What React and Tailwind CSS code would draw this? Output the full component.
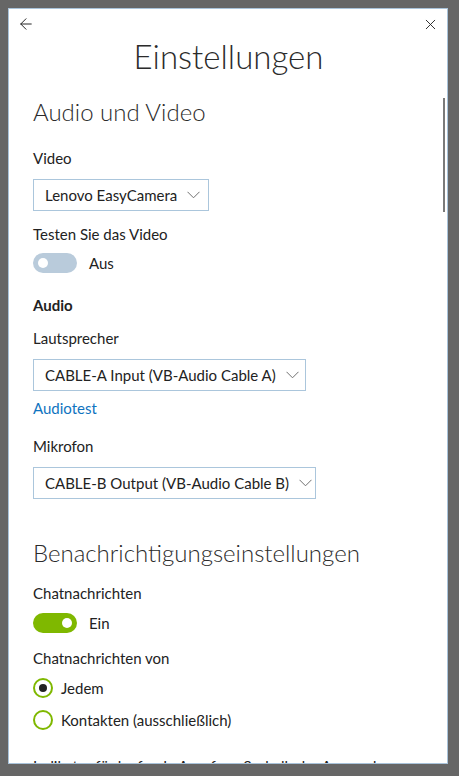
import { ArrowLeft, X } from 'lucide-react';

const font = { fontFamily: 'Lato, "Open Sans", sans-serif' };

function Chevron() {
  return (
    <svg width="13" height="8" viewBox="0 0 13 8" className="shrink-0">
      <path d="M0.5 0.8 L6.5 6.8 L12.5 0.8" fill="none" stroke="#707070" strokeWidth="1" />
    </svg>
  );
}

function Dropdown({ label, width }) {
  return (
    <div className={`flex items-center justify-between gap-[10px] h-[32px] border border-[#abc6dc] pl-[11px] pr-[10px] ${width}`}>
      <span className="text-[15px] text-[#222] whitespace-nowrap">{label}</span>
      <Chevron />
    </div>
  );
}

function Toggle({ on, label }) {
  return (
    <div className="flex items-center h-[20px] gap-[12px]">
      <div className={`w-[44px] h-[20px] rounded-full flex items-center px-[5px] ${on ? 'bg-[#7fb800] justify-end' : 'bg-[#b9cbdb] justify-start'}`}>
        <div className="w-[10px] h-[10px] rounded-full bg-white" />
      </div>
      <span className="text-[15px] text-[#222]">{label}</span>
    </div>
  );
}

function Radio({ checked, label, className }) {
  return (
    <div className={`flex items-center h-[20px] gap-[8px] ${className}`}>
      <div className="w-[20px] h-[20px] rounded-full border-2 border-[#7fb800] flex items-center justify-center">
        {checked && <div className="w-[8px] h-[8px] rounded-full bg-[#222]" />}
      </div>
      <span className="text-[15px] text-[#222]">{label}</span>
    </div>
  );
}

export default function App() {
  return (
    <div className="w-[459px] h-[776px] bg-[#666666] pt-[8px] pl-[8px]" style={font}>
      <div className="relative w-[440px] h-[756px] bg-white border border-[#a9c3da] overflow-hidden flex flex-col">
        {/* Header */}
        <div className="flex items-start justify-between pl-[8px] pr-[8px]">
          <div className="h-[30px] flex items-center">
            <ArrowLeft size={18} strokeWidth={1.3} className="text-[#222]" />
          </div>
          <h1 className="flex-1 text-center pt-[25px] text-[33px] leading-[44px] font-light text-[#2b2b2b]">Einstellungen</h1>
          <div className="h-[30px] flex items-center">
            <X size={17} strokeWidth={1.3} className="text-[#222]" />
          </div>
        </div>

        {/* Scrollbar */}
        <div className="absolute right-[2px] top-[89px] w-[2px] h-[114px] bg-[#7a7a7a]" />

        {/* Content */}
        <div className="flex flex-col items-start px-[24px]">
          <h2 className="mt-[18px] text-[24px] leading-[32px] font-light text-[#2b2b2b]">Audio und Video</h2>
          <p className="mt-[20px] text-[15px] leading-[20px] text-[#222]">Video</p>
          <div className="mt-[11px]">
            <Dropdown label="Lenovo EasyCamera" width="w-[176px]" />
          </div>
          <p className="mt-[13px] text-[15px] leading-[20px] text-[#222]">Testen Sie das Video</p>
          <div className="mt-[9px]">
            <Toggle on={false} label="Aus" />
          </div>
          <p className="mt-[22px] text-[15px] leading-[20px] font-bold text-[#222]">Audio</p>
          <p className="mt-[13px] text-[15px] leading-[20px] text-[#222]">Lautsprecher</p>
          <div className="mt-[11px]">
            <Dropdown label="CABLE-A Input (VB-Audio Cable A)" width="w-[273px]" />
          </div>
          <a className="mt-[7px] text-[15px] leading-[20px] text-[#0f74c0]">Audiotest</a>
          <p className="mt-[18px] text-[15px] leading-[20px] text-[#222]">Mikrofon</p>
          <div className="mt-[11px]">
            <Dropdown label="CABLE-B Output (VB-Audio Cable B)" width="w-[283px]" />
          </div>

          <h2 className="mt-[38px] text-[24px] leading-[32px] font-light text-[#2b2b2b]">Benachrichtigungseinstellungen</h2>
          <p className="mt-[14px] text-[15px] leading-[20px] text-[#222]">Chatnachrichten</p>
          <div className="mt-[10px]">
            <Toggle on label="Ein" />
          </div>
          <p className="mt-[15px] text-[15px] leading-[20px] text-[#222]">Chatnachrichten von</p>
          <Radio checked label="Jedem" className="mt-[10px]" />
          <Radio label="Kontakten (ausschließlich)" className="mt-[12px]" />
          <p className="mt-[26px] text-[15px] leading-[20px] text-[#222] whitespace-nowrap">Indikator für laufende Anrufe außerhalb der Anwendung</p>
        </div>
      </div>
    </div>
  );
}
